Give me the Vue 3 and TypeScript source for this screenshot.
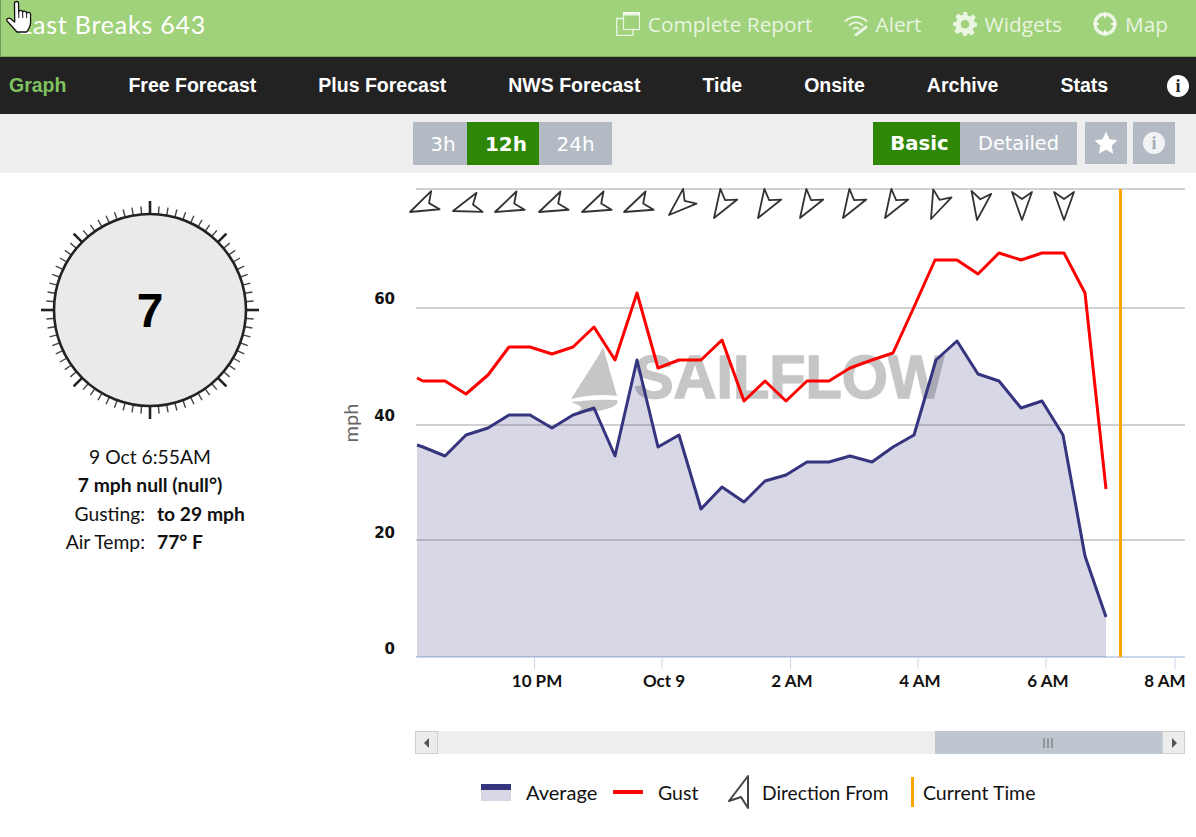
<script setup lang="ts">
const navItems = ['Graph', 'Free Forecast', 'Plus Forecast', 'NWS Forecast', 'Tide', 'Onsite', 'Archive', 'Stats']

const gustPoints: number[][] = [[417,378],[423,381],[445,381],[466,394],[488,375],[509,347],[530,347],[552,354],[573,347],[594,327],[615,360],[637,293],[658,368],[679,360],[701,360],[722,340],[744,401],[765,381],[786,401],[807,381],[829,381],[850,368],[872,360],[893,353],[914,307],[935,260],[957,260],[978,274],[999,253],[1021,260],[1042,253],[1064,253],[1085,293],[1106,489]]
const avgPoints: number[][] = [[417,445],[423,447],[445,456],[466,435],[488,428],[509,415],[530,415],[552,428],[573,415],[594,408],[615,456],[637,360],[658,447],[679,435],[701,509],[722,487],[744,502],[765,481],[786,475],[807,462],[829,462],[850,456],[872,462],[893,447],[914,435],[936,360],[957,341],[978,374],[999,381],[1021,408],[1042,401],[1063,435],[1085,556],[1106,617]]

const toLine = (pts: number[][]): string => pts.map((p) => p.join(',')).join(' ')
const gustLine = toLine(gustPoints)
const avgLine = toLine(avgPoints)
const avgArea = `417,657 ${avgLine} 1106,657`

const gridLines = [189, 308, 425, 540]
const yLabels = [
  { t: '60', y: 304 },
  { t: '40', y: 421 },
  { t: '20', y: 538 },
  { t: '0', y: 654 },
]
const xTicks = [534.5, 662, 790.5, 918, 1046, 1175]
const xLabels = [
  { t: '10 PM', x: 537 },
  { t: 'Oct 9', x: 664 },
  { t: '2 AM', x: 792 },
  { t: '4 AM', x: 920 },
  { t: '6 AM', x: 1048 },
  { t: '8 AM', x: 1165 },
]

const arrows: number[][] = [[410,212,65],[453,211,72],[495,212,66],[539,212,66],[582,212,66],[624,212,66],[669,215,48],[714,218,32],[758,218,32],[800,218,32],[843,218,32],[885,218,32],[931,219,24],[977,220,9],[1022,220,0],[1064,220,0]]

interface Tick { x1: number; y1: number; x2: number; y2: number; w: number; c: string }
const compassTicks: Tick[] = []
for (let d = 0; d < 360; d += 5) {
  const a = (d * Math.PI) / 180
  const major = d % 90 === 0
  const mid = d % 45 === 0
  const outer = major ? 109 : mid ? 108 : 104
  compassTicks.push({
    x1: 115 + Math.sin(a) * 95,
    y1: 115 - Math.cos(a) * 95,
    x2: 115 + Math.sin(a) * outer,
    y2: 115 - Math.cos(a) * outer,
    w: major || mid ? 2.6 : 1.4,
    c: major || mid ? '#222' : '#444',
  })
}
</script>

<template>
  <div class="page">
    <header class="topbar">
      <div class="title">East Breaks 643</div>
      <div class="links">
        <span class="link">
          <svg width="24" height="24" viewBox="0 0 24 24" fill="none" stroke="currentColor">
            <rect x="7.5" y="0.5" width="16" height="17" stroke-width="1.2" />
            <rect x="7" y="0" width="17" height="3.5" fill="currentColor" stroke="none" />
            <path d="M7 6.5H0.7V23.3H17V18" stroke-width="1.3" />
          </svg>
          Complete Report
        </span>
        <span class="link">
          <svg width="24" height="24" viewBox="0 0 24 24" fill="none" stroke="currentColor" stroke-width="2">
            <path d="M1 9.5Q12 0 23 9.5" />
            <path d="M5 13.5Q12 7 19 13.5" />
            <path d="M9 17Q12 14.5 15 17" />
            <path d="M12 23L22 15" stroke-width="3" stroke-linecap="round" />
          </svg>
          Alert
        </span>
        <span class="link">
          <svg width="24" height="24" viewBox="0 0 24 24">
            <path fill="currentColor" fill-rule="evenodd" d="M10 0h4l.7 3.4 2.3 1 3-1.9 2.8 2.8-1.9 3 1 2.3L24.200 11v3.600l-3.400.7-1 2.300 1.900 3-2.800 2.800-3-1.900-2.300 1L13.800 24.500h-3.600l-.7-3.400-2.300-1-3 1.900-2.800-2.800 1.900-3-1-2.300L-.1 14v-3.600l3.400-.7 1-2.300-1.900-3 2.800-2.800 3 1.900 2.300-1zM12 8a4.300 4.300 0 1 0 0 8.600A4.300 4.300 0 0 0 12 8z" />
          </svg>
          Widgets
        </span>
        <span class="link">
          <svg width="24" height="24" viewBox="0 0 24 24" fill="none" stroke="currentColor">
            <circle cx="12" cy="12" r="10" stroke-width="3.400" />
            <path d="M12 1V6M12 18V23M1 12H6M18 12H23" stroke-width="2.200" />
          </svg>
          Map
        </span>
      </div>
    </header>

    <nav class="navbar">
      <span v-for="(item, i) in navItems" :key="item" class="nav-item" :class="{ active: i === 0 }">{{ item }}</span>
      <span class="nav-info">i</span>
    </nav>

    <div class="subbar">
      <div class="seg range">
        <span class="seg-btn r3">3h</span>
        <span class="seg-btn on r12">12h</span>
        <span class="seg-btn r24">24h</span>
      </div>
      <div class="right-tools">
        <div class="seg">
          <span class="seg-btn on basic">Basic</span>
          <span class="seg-btn detailed">Detailed</span>
        </div>
        <span class="icon-btn">
          <svg width="24" height="24" viewBox="0 0 24 24"><path fill="#fff" d="M12 .8l3.500 7.400 8 1-5.900 5.500 1.600 8L12 18.800 4.800 22.700l1.600-8L.5 9.200l8-1z" /></svg>
        </span>
        <span class="icon-btn"><span class="btn-info">i</span></span>
      </div>
    </div>

    <main class="content">
      <section class="side">
        <svg class="gauge" width="230" height="230" viewBox="0 0 230 230">
          <line v-for="(t, i) in compassTicks" :key="i" :x1="t.x1" :y1="t.y1" :x2="t.x2" :y2="t.y2" :stroke="t.c" :stroke-width="t.w" />
          <circle cx="115" cy="115" r="96" fill="#eaeaea" stroke="#222" stroke-width="2.600" />
          <text x="115" y="132" text-anchor="middle" class="gauge-num">7</text>
        </svg>
        <div class="readout">
          <div class="line">9 Oct 6:55AM</div>
          <div class="line strong">7 mph null (null°)</div>
          <div class="pair"><span>Gusting:</span><b>to 29 mph</b></div>
          <div class="pair"><span>Air Temp:</span><b>77° F</b></div>
        </div>
      </section>

      <section class="chart">
        <svg class="plot" width="896" height="552" viewBox="300 173 896 552">
          <g class="watermark">
            <path d="M571 399L599 355L603 347L617 396Q595 393 571 399Z" />
            <path d="M571 402Q595 399 617 400Q620 404 610 408Q590 414 577 411Q588 408 571 402Z" />
            <text x="634" y="398" textLength="310" lengthAdjust="spacingAndGlyphs">SAILFLOW</text>
          </g>
          <line v-for="y in gridLines" :key="y" x1="416" :y1="y" x2="1185" :y2="y" stroke="#c2c2c2" stroke-width="1.500" />
          <line v-for="x in xTicks" :key="x" :x1="x" y1="657" :x2="x" y2="669" stroke="#ccd6eb" />
          <line x1="416" y1="657" x2="1185" y2="657" stroke="#ccd6eb" stroke-width="2" />
          <polygon :points="avgArea" fill="#35357f" fill-opacity="0.2" />
          <polyline :points="avgLine" fill="none" stroke="#35357f" stroke-width="3" stroke-linejoin="round" />
          <polyline :points="gustLine" fill="none" stroke="#f00" stroke-width="3" stroke-linejoin="round" />
          <line x1="1120.500" y1="189" x2="1120.500" y2="657" stroke="#ffa500" stroke-width="3" />
          <polygon
            v-for="(a, i) in arrows"
            :key="i"
            points="0,0 -10,-28 0,-21 10,-28"
            :transform="`translate(${a[0]} ${a[1]}) rotate(${a[2]})`"
            fill="none"
            stroke="#333"
            stroke-width="1.800"
            stroke-linejoin="round"
          />
          <text x="358" y="423" text-anchor="middle" transform="rotate(-90 358 423)" class="y-title">mph</text>
          <text v-for="l in yLabels" :key="l.t" x="395" :y="l.y" text-anchor="end" class="y-label">{{ l.t }}</text>
          <text v-for="l in xLabels" :key="l.t" :x="l.x" y="687" text-anchor="middle" class="x-label">{{ l.t }}</text>
        </svg>

        <div class="scroller">
          <span class="scroll-btn">
            <svg width="6" height="10" viewBox="0 0 6 10"><path d="M5 0V10L0 5Z" fill="#555" /></svg>
          </span>
          <span class="scroll-track"></span>
          <span class="scroll-thumb">
            <svg width="11" height="10" viewBox="0 0 11 10"><path d="M1 0V10M5 0V10M9 0V10" stroke="#666" /></svg>
          </span>
          <span class="scroll-btn">
            <svg width="6" height="10" viewBox="0 0 6 10"><path d="M1 0V10L6 5Z" fill="#555" /></svg>
          </span>
        </div>

        <div class="legend">
          <span class="swatch-avg"></span>
          <span class="l-avg">Average</span>
          <span class="swatch-gust"></span>
          <span class="l-gust">Gust</span>
          <svg class="l-arrow" width="22" height="34" viewBox="0 0 22 34">
            <path d="M20 1L1 26L13 22L20 33Z" fill="#fff" stroke="#444" stroke-width="2" stroke-linejoin="round" />
          </svg>
          <span class="l-dir">Direction From</span>
          <span class="swatch-now"></span>
          <span class="l-now">Current Time</span>
        </div>
      </section>
    </main>

    <svg class="cursor" width="34" height="36" viewBox="0 0 34 36">
      <path
        d="M14.500 3C14.500 1 18.500 1 18.500 3L18.700 11.500C19 10 22.300 9.800 22.600 12C23 10.500 26.300 10.800 26.600 13C27.500 11.800 30.600 12.300 30.600 14.500L30.600 22C30.600 27 28.500 29.500 26.500 32L17 32C14 29 11 25 7 21C5.800 19 9 17 11 19L14.700 22Z"
        fill="#fff"
        stroke="#111"
        stroke-width="1.300"
        stroke-linejoin="round"
      />
      <path d="M18.700 11.500L18.900 18M22.600 12L22.800 18M26.600 13L26.700 18" fill="none" stroke="#111" stroke-width="1" />
    </svg>
  </div>
</template>

<style scoped>
.page {
  position: relative;
  width: 1196px;
  height: 837px;
  overflow: hidden;
  background: #fff;
  font-family: Lato, "Open Sans", sans-serif;
  color: #111;
}
.topbar {
  box-sizing: border-box;
  height: 57px;
  display: flex;
  align-items: center;
  justify-content: space-between;
  padding: 0 28px 9px 17px;
  background: #9fd27b;
  border-left: 1px solid #6f9d58;
  border-bottom: 1px solid #7fae63;
}
.title {
  font-size: 25px;
  color: #fff;
  letter-spacing: 0.77px;
}
.links {
  display: flex;
  gap: 31px;
}
.link {
  display: inline-flex;
  align-items: center;
  gap: 8px;
  font-family: "Open Sans", sans-serif;
  font-size: 20.800px;
  color: rgba(255, 255, 255, 0.78);
  white-space: nowrap;
}
.navbar {
  height: 57px;
  display: flex;
  align-items: center;
  gap: 62px;
  padding: 0 7px 0 9px;
  background: #222;
}
.nav-item {
  font-family: "Liberation Sans", Arial, sans-serif;
  font-size: 19.500px;
  font-weight: 700;
  color: #fff;
  white-space: nowrap;
}
.nav-item.active {
  color: #7fc25f;
}
.nav-info {
  margin-left: -3px;
  flex: none;
  width: 22px;
  height: 22px;
  border-radius: 50%;
  background: #fff;
  color: #222;
  font: 700 18px/22px "Liberation Serif", serif;
  text-align: center;
}
.subbar {
  box-sizing: border-box;
  height: 59px;
  display: flex;
  justify-content: space-between;
  align-items: flex-start;
  padding: 8px 21px 0 413px;
  background: #eee;
}
.seg {
  display: flex;
}
.seg-btn {
  box-sizing: border-box;
  height: 43px;
  display: flex;
  align-items: center;
  justify-content: center;
  background: #b3bac4;
  color: #fff;
  font-family: "DejaVu Sans", sans-serif;
  font-size: 20px;
}
.seg-btn.on {
  background: #2e8707;
  font-weight: 700;
}
.r3 { width: 54px; padding-left: 6px; }
.r12 { width: 72px; padding-left: 6px; }
.r24 { width: 73px; }
.basic { width: 87px; padding-left: 6px; font-size: 19.700px; }
.detailed { width: 117px; font-size: 19.300px; }
.right-tools {
  display: flex;
  align-items: flex-start;
  gap: 8px;
}
.icon-btn {
  width: 42px;
  height: 42px;
  display: flex;
  align-items: center;
  justify-content: center;
  background: #b3bac4;
}
.icon-btn + .icon-btn {
  margin-left: -2px;
}
.btn-info {
  width: 22px;
  height: 22px;
  border-radius: 50%;
  background: #f2f3f5;
  color: #a4acb7;
  font: 700 18px/22px "Liberation Serif", serif;
  text-align: center;
}
.content {
  display: flex;
}
.side {
  width: 300px;
  flex: none;
}
.gauge {
  display: block;
  margin: 22px 0 0 35px;
}
.gauge-num {
  font-family: "Liberation Sans", Arial, sans-serif;
  font-size: 48px;
  font-weight: 700;
  fill: #000;
}
.readout {
  margin-top: 18px;
  font-size: 19.300px;
  line-height: 28.400px;
}
.line {
  text-align: center;
}
.strong {
  font-weight: 700;
}
.pair {
  display: grid;
  grid-template-columns: 145px 1fr;
  column-gap: 12px;
}
.pair span {
  text-align: right;
}
.chart {
  width: 896px;
  flex: none;
}
.plot {
  display: block;
}
.watermark path {
  fill: #c6c6c6;
}
.watermark text {
  font-family: "Liberation Sans", Arial, sans-serif;
  font-size: 62px;
  font-weight: 700;
  fill: #c6c6c6;
  stroke: #c6c6c6;
  stroke-width: 1.500px;
}
.y-title {
  font-size: 20px;
  fill: #666;
}
.y-label {
  font-family: "DejaVu Sans", sans-serif;
  font-size: 15px;
  font-weight: 700;
  fill: #111;
}
.x-label {
  font-size: 17px;
  font-weight: 700;
  fill: #111;
}
.scroller {
  box-sizing: border-box;
  display: flex;
  width: 770px;
  height: 23px;
  margin: 6px 0 0 115px;
}
.scroll-btn {
  box-sizing: border-box;
  width: 23px;
  display: flex;
  align-items: center;
  justify-content: center;
  background: #ececec;
  border: 1px solid #cfcfcf;
}
.scroll-track {
  width: 497px;
  background: #eee;
}
.scroll-thumb {
  width: 227px;
  display: flex;
  align-items: center;
  justify-content: center;
  background: #bec6d0;
}
.legend {
  display: flex;
  align-items: center;
  height: 34px;
  margin: 21px 0 0 181px;
  font-size: 19.500px;
  white-space: nowrap;
}
.legend > * {
  flex: none;
}
.swatch-avg {
  width: 30px;
  height: 11px;
  border-top: 6px solid #35357f;
  background: #d7d7e5;
}
.l-avg { margin-left: 15px; width: 72px; font-size: 20px; }
.swatch-gust {
  width: 30px;
  height: 4px;
  margin-left: 15px;
  background: #f00;
}
.l-gust { margin-left: 15px; width: 39px; }
.l-arrow { margin-left: 31px; }
.l-dir { margin-left: 12px; width: 126px; font-size: 19.200px; }
.swatch-now {
  width: 3px;
  height: 30px;
  margin: 0 9px 0 23px;
  background: #ffa500;
}
.cursor {
  position: absolute;
  left: 0;
  top: 0;
}
</style>
